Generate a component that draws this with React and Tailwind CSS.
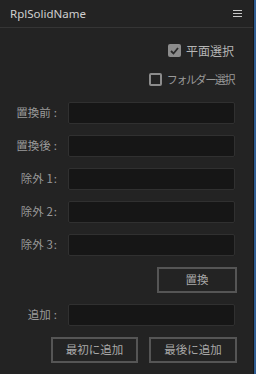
import { useState } from "react";

const font = { fontFamily: '"Noto Sans CJK JP", "Noto Sans", sans-serif' };

const Field = ({ label, tight }) => (
  <div className="flex items-center h-[22px]">
    <label className="w-[58px] pr-[1px] flex justify-end items-center text-[11.5px] text-[#9a9a9a] leading-none">
      <span>{label}</span>
      <span className={tight ? "ml-[1px]" : "ml-[3px]"}>:</span>
    </label>
    <input
      type="text"
      className="ml-[10px] w-[167px] h-[22px] bg-[#161616] border border-[#303030] rounded-[2px] outline-none"
    />
  </div>
);

const Btn = ({ children, className }) => (
  <button
    type="button"
    className={
      "h-[26px] border-2 border-[#555555] bg-[#232323] text-[11.5px] text-[#a8a8a8] leading-none " +
      className
    }
  >
    {children}
  </button>
);

const Check = ({ checked, onChange, label, textClass }) => (
  <label className="flex items-center gap-[5px] cursor-pointer" onClick={onChange}>
    <span
      className={
        "w-[13px] h-[13px] rounded-[2px] flex items-center justify-center " +
        (checked ? "bg-[#8c8c8c]" : "border-2 border-[#8c8c8c]")
      }
    >
      {checked && (
        <svg width="9" height="8" viewBox="0 0 9 8">
          <path d="M1 4 L3.5 6.5 L8 1" stroke="#2a2a2a" strokeWidth="1.8" fill="none" />
        </svg>
      )}
    </span>
    <span className={"leading-none " + textClass}>{label}</span>
  </label>
);

const App = () => {
  const [plane, setPlane] = useState(true);
  const [folder, setFolder] = useState(false);

  return (
    <div
      className="w-[256px] h-[374px] flex bg-[#232323] overflow-hidden"
      style={font}
    >
      <div className="flex-1 flex flex-col border-r border-[#161616]">
        {/* Header */}
        <div className="h-[28px] flex items-center justify-between pl-[10px] pr-[11px] border-b border-[#353535]">
          <span
            className="text-[11.5px] text-[#cfcfcf]"
            style={{ fontFamily: '"Noto Sans", sans-serif' }}
          >
            RplSolidName
          </span>
          <svg width="9" height="7" viewBox="0 0 9 7">
            <rect x="0" y="0" width="9" height="1" fill="#c8c8c8" />
            <rect x="0" y="3" width="9" height="1" fill="#c8c8c8" />
            <rect x="0" y="6" width="9" height="1" fill="#c8c8c8" />
          </svg>
        </div>

        {/* Options */}
        <div className="flex flex-col items-end pr-[19px] pt-[16px] gap-[16px]">
          <Check
            checked={plane}
            onChange={() => setPlane(!plane)}
            label="平面選択"
            textClass="text-[12px] text-[#b5b5b5]"
          />
          <Check
            checked={folder}
            onChange={() => setFolder(!folder)}
            label="フォルダー選択"
            textClass="text-[11px] tracking-[-1.4px] text-[#9a9a9a]"
          />
        </div>

        {/* Fields */}
        <div className="flex flex-col gap-[11px] mt-[16px]">
          <Field label="置換前" />
          <Field label="置換後" />
          <Field label="除外 1" tight />
          <Field label="除外 2" tight />
          <Field label="除外 3" tight />
        </div>

        <div className="flex justify-end pr-[16px] mt-[11px]">
          <Btn className="w-[80px]">置換</Btn>
        </div>

        <div className="mt-[11px]">
          <Field label="追加" />
        </div>

        <div className="flex justify-end gap-[11px] pr-[16px] mt-[11px]">
          <Btn className="w-[87px]">最初に追加</Btn>
          <Btn className="w-[88px]">最後に追加</Btn>
        </div>
      </div>
      <div className="w-[2px] bg-[#2f5d93]" />
    </div>
  );
};

export default App;
